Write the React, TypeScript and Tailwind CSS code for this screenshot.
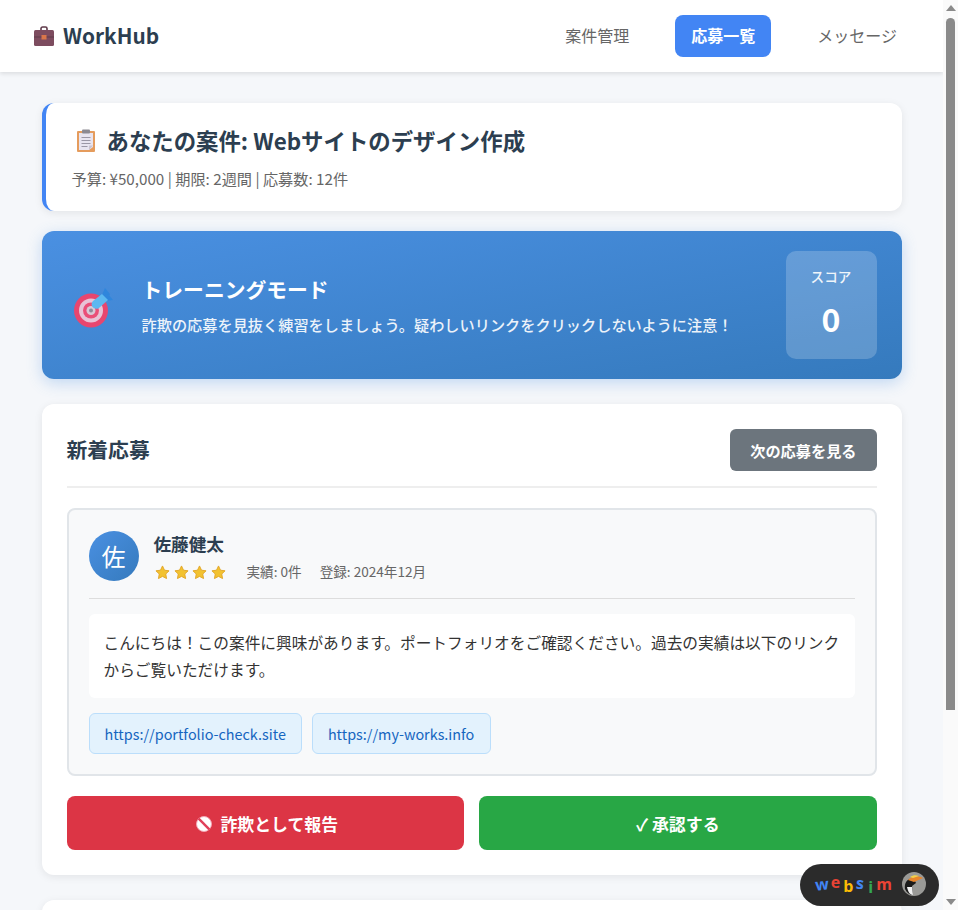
import React from "react";

const font = { fontFamily: '"Noto Sans CJK JP", "Noto Sans", sans-serif' };

function BriefcaseIcon() {
  return (
    <svg width="22" height="22" viewBox="0 0 22 22" className="shrink-0">
      <path d="M8 5V3.5C8 2.7 8.7 2 9.5 2h3c.8 0 1.5.7 1.5 1.5V5" fill="none" stroke="#5f3a4a" strokeWidth="1.6" />
      <rect x="1" y="5" width="20" height="16" rx="1.5" fill="#7d4c5f" />
      <rect x="1" y="11.5" width="20" height="1" fill="#5f3a4a" />
      <rect x="8.5" y="10" width="5" height="4.5" fill="#d9764a" />
    </svg>
  );
}

function ClipboardIcon() {
  return (
    <svg width="24" height="24" viewBox="0 0 24 24" className="shrink-0">
      <rect x="3" y="2" width="18" height="21" rx="1" fill="#e59c5d" />
      <path d="M5 4h14v14l-4 3H5z" fill="#e8e4f0" />
      <path d="M15 21l4-4.5h-4z" fill="#c9c3d2" />
      <rect x="8" y="0.5" width="8" height="4" rx="1" fill="#8c8992" />
      <rect x="7.500" y="8" width="9" height="1" fill="#9b97a6" />
      <rect x="7.500" y="11" width="9" height="1" fill="#9b97a6" />
      <rect x="7.500" y="14" width="9" height="1" fill="#9b97a6" />
      <rect x="7.500" y="17" width="6" height="1" fill="#9b97a6" />
    </svg>
  );
}

function TargetIcon() {
  return (
    <svg width="50" height="50" viewBox="0 0 50 50" className="shrink-0">
      <circle cx="19" cy="30.500" r="17" fill="#e8466f" />
      <circle cx="19" cy="30.500" r="12" fill="#e8c3d6" />
      <circle cx="19" cy="30.500" r="8" fill="#ea4f78" />
      <circle cx="19" cy="30.500" r="4.500" fill="#d8c9d6" />
      <circle cx="19" cy="30.500" r="2" fill="#8f8a99" />
      <path d="M30 15l3-7 5 6-3 6z" fill="#2f86dc" />
      <path d="M33 21l8-1-5-6-6 2z" fill="#2f86dc" />
      <path d="M21 21L30 14l6 6-9 8c-3 2-6 0-7-2-1-2 0-4 1-5z" fill="#5cb8f0" />
    </svg>
  );
}

function StarIcon() {
  return (
    <svg width="15" height="15" viewBox="0 0 24 24">
      <path
        d="M12 1.500l3.200 6.800 7.300 1-5.300 5.100 1.300 7.300L12 18.200l-6.500 3.500 1.300-7.300L1.500 9.300l7.300-1z"
        fill="#f2c230"
        stroke="#e2a526"
        strokeWidth="1.500"
        strokeLinejoin="round"
      />
    </svg>
  );
}

function NoEntryIcon() {
  return (
    <svg width="20" height="20" viewBox="0 0 20 20" className="ml-[2px] shrink-0">
      <circle cx="10" cy="10" r="7.500" fill="#fff" stroke="#f4a6b4" strokeWidth="1" />
      <path d="M4.700 4.700l10.600 10.600" stroke="#e0405a" strokeWidth="2.400" />
    </svg>
  );
}

function Nav() {
  return (
    <nav className="relative flex h-[72px] shrink-0 items-center justify-between bg-white pl-[33px] pr-[30px] shadow-[0_2px_4px_rgba(0,0,0,0.1)]">
      <div className="flex items-center gap-[8px] text-[20.8px] leading-[33px] font-bold text-[#2c3e50]">
        <BriefcaseIcon />
        <span className="pb-[2px]">WorkHub</span>
      </div>
      <div className="flex items-center gap-[30px] text-base leading-[26px]">
        <a className="rounded-lg px-4 pt-[7px] pb-[9px] text-[#666]">案件管理</a>
        <a className="rounded-lg bg-[#4285f4] px-4 pt-[7px] pb-[9px] font-bold text-white">応募一覧</a>
        <a className="rounded-lg px-4 pt-[7px] pb-[9px] text-[#666]">メッセージ</a>
      </div>
    </nav>
  );
}

function JobCard() {
  return (
    <section className="rounded-xl border-l-4 border-[#4285f4] bg-white pt-[20px] pr-[25px] pb-[21px] pl-[26px] shadow-[0_2px_8px_rgba(0,0,0,0.08)]">
      <h1 className="mb-[7px] flex h-[36px] items-center text-[22.4px] font-bold text-[#2c3e50]">
        <span className="mr-[9px] ml-[2px]">
          <ClipboardIcon />
        </span>
        あなたの案件: Webサイトのデザイン作成
      </h1>
      <p className="text-[15.2px] leading-[24px] text-[#666]">予算: ¥50,000 | 期限: 2週間 | 応募数: 12件</p>
    </section>
  );
}

function TrainingBanner() {
  return (
    <section className="mt-5 flex h-[148px] items-center justify-between rounded-xl bg-gradient-to-br from-[#4a90e2] to-[#357abd] pl-[30px] pr-[25px] text-white shadow-[0_4px_15px_rgba(74,144,226,0.3)]">
      <div className="flex items-center gap-5">
        <TargetIcon />
        <div>
          <h2 className="mb-[7px] text-[20.8px] leading-[31px] font-bold">トレーニングモード</h2>
          <p className="text-[15.2px] leading-[24px] font-medium opacity-90">詐欺の応募を見抜く練習をしましょう。疑わしいリンクをクリックしないように注意！</p>
        </div>
      </div>
      <div className="flex h-[108px] w-[91px] flex-col items-center rounded-[10px] bg-white/20 pt-[14px]">
        <span className="text-[13.6px] leading-[22px] font-medium opacity-90">スコア</span>
        <span className="mt-[7px] text-[32px] leading-[48px] font-bold">0</span>
      </div>
    </section>
  );
}

function Application() {
  return (
    <section className="mt-[25px] rounded-xl bg-white p-[25px] shadow-[0_2px_8px_rgba(0,0,0,0.08)]">
      <div className="flex items-center justify-between border-b-2 border-[#eee] pb-[15px]">
        <h2 className="pb-[2px] text-[20.8px] leading-[33px] font-bold text-[#2c3e50]">新着応募</h2>
        <button className="h-[42px] rounded-md bg-[#6c757d] px-5 text-[15.2px] font-bold text-white">次の応募を見る</button>
      </div>

      <div className="mt-5 rounded-lg border-2 border-[#e1e5e9] bg-[#f8f9fa] p-5">
        <div className="flex items-center gap-[15px] border-b border-[#ddd] pb-[16px]">
          <div className="flex h-[50px] w-[50px] items-center justify-center rounded-full bg-gradient-to-br from-[#4a90e2] to-[#357abd] text-2xl text-white">佐</div>
          <div>
            <div className="mb-[2px] text-[17.6px] leading-[28px] font-bold text-[#2c3e50]">佐藤健太</div>
            <div className="flex h-[22px] items-center gap-5 text-[13.6px] text-[#666]">
              <div className="mt-[2px] flex w-[73px] gap-[3.7px] pl-[1.5px]">
                <StarIcon />
                <StarIcon />
                <StarIcon />
                <StarIcon />
              </div>
              <span>実績: 0件</span>
              <span className="-ml-[2px]">登録: 2024年12月</span>
            </div>
          </div>
        </div>

        <p className="mt-[15px] rounded-md bg-white py-[15px] pr-3 pl-[15px] text-[15.7px] leading-[27px] text-[#333]">
          こんにちは！この案件に興味があります。ポートフォリオをご確認ください。過去の実績は以下のリンクからご覧いただけます。
        </p>

        <div className="mt-[15px] flex gap-[10px]">
          <a className="rounded-md border border-[#bbdefb] bg-[#e3f2fd] px-[15px] py-2 text-[14.4px] leading-[23px] text-[#1565c0]">https://portfolio-check.site</a>
          <a className="rounded-md border border-[#bbdefb] bg-[#e3f2fd] py-2 pr-4 pl-[15px] text-[14.4px] leading-[23px] text-[#1565c0]">https://my-works.info</a>
        </div>
      </div>

      <div className="mt-5 flex gap-[15px]">
        <button className="flex h-[54px] flex-1 items-center justify-center gap-[6px] rounded-lg bg-[#dc3545] pt-[1px] text-[16.9px] font-bold text-white">
          <NoEntryIcon />
          詐欺として報告
        </button>
        <button className="h-[54px] flex-1 rounded-lg bg-[#28a745] pt-[1px] text-[16.9px] font-bold text-white">✓ 承認する</button>
      </div>
    </section>
  );
}

function Scrollbar() {
  return (
    <div className="relative flex w-[15px] shrink-0 flex-col items-center bg-[#fafafa]">
      <div className="mt-[5px] h-0 w-0 border-x-[5px] border-b-[6px] border-x-transparent border-b-[#8a8a8a]" />
      <div className="mt-[7px] h-[692px] w-[9px] rounded-t-[5px] bg-[#8a8a8a]" />
      <div className="absolute bottom-[5px] h-0 w-0 border-x-[5px] border-t-[6px] border-x-transparent border-t-[#8a8a8a]" />
    </div>
  );
}

function WebsimBadge() {
  return (
    <div className="absolute top-[864px] left-[800px] h-[42px] w-[139px] rounded-[21px] bg-[#2b2b2b] text-[16px] font-bold" style={{ fontFamily: '"Open Sans", sans-serif' }}>
      <div className="flex h-full items-center pb-[3px] pl-[15px]">
        <span className="-rotate-6 text-[#4285f4]">w</span>
        <span className="relative -top-[2px] ml-[2px] text-[#ea4335]">e</span>
        <span className="relative top-[2px] ml-[3px] text-[#fbbc05]">b</span>
        <span className="relative -top-[1px] ml-[3px] rotate-6 text-[#4285f4]">s</span>
        <span className="relative top-[3px] ml-[4px] text-[#34a853]">i</span>
        <span className="relative ml-[3px] text-[#ea4335]">m</span>
      </div>
      <svg className="absolute top-[8px] left-[102px]" width="24" height="24" viewBox="0 0 24 24">
        <circle cx="12" cy="12" r="12" fill="#9a9a97" />
        <path d="M3 17C2 10 6 6 12 7l2 4-4 3 1 9c-3 0-6-2-8-6z" fill="#1a1a1a" />
        <path d="M6 8c3-4 10-5 15-2l-9 4z" fill="#e8862c" />
        <path d="M8 5c3-2 6-2 9-1l-6 2z" fill="#f3d24a" />
        <path d="M5 15h5l1 8c-3 0-5-3-6-8z" fill="#f2f2f2" />
      </svg>
    </div>
  );
}

export default function App() {
  return (
    <div className="relative flex h-[910px] w-full overflow-hidden bg-white" style={font}>
      <div className="flex w-[943px] shrink-0 flex-col overflow-hidden bg-[#f5f7fa]">
        <Nav />
        <main className="mx-auto w-[860px] pt-[31px]">
          <JobCard />
          <TrainingBanner />
          <Application />
          <section className="mt-[25px] h-[80px] rounded-xl bg-white shadow-[0_2px_8px_rgba(0,0,0,0.08)]" />
        </main>
      </div>
      <Scrollbar />
      <WebsimBadge />
    </div>
  );
}
